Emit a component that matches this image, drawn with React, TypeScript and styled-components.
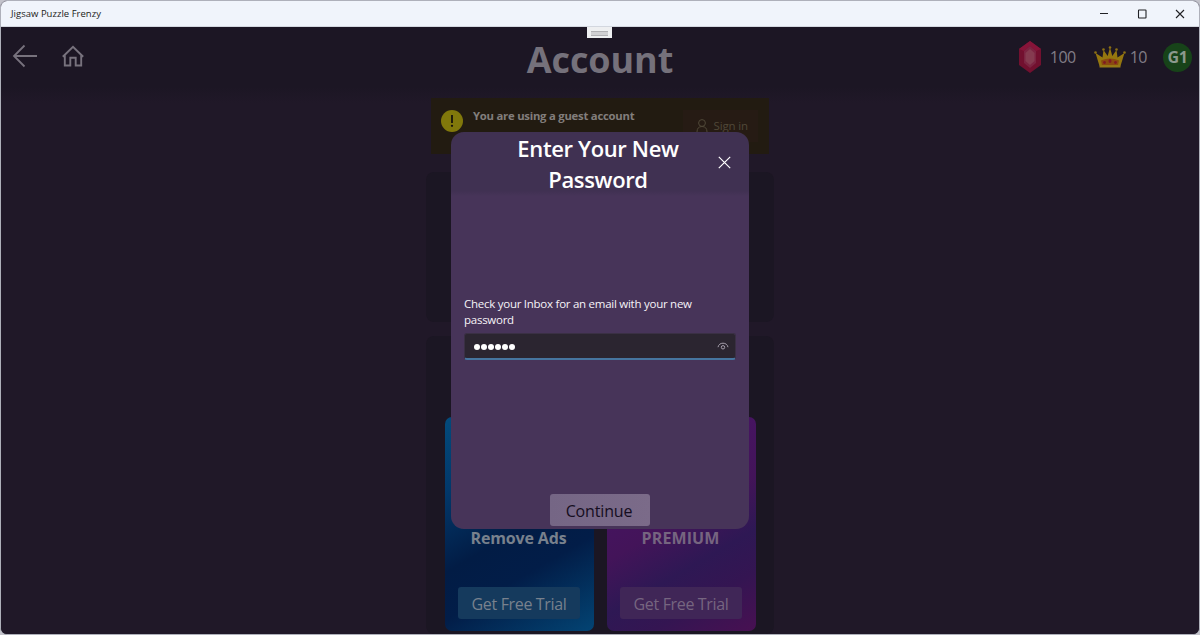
import React from 'react';
import styled, { createGlobalStyle } from 'styled-components';

const GlobalStyle = createGlobalStyle`
  * { box-sizing: border-box; }
  html, body { margin: 0; background: #c3c3cb; }
  body { font-family: 'Open Sans', 'Noto Sans', sans-serif; overflow: hidden; }
`;

const Window = styled.div`
  position: relative;
  display: flex;
  flex-direction: column;
  width: 1200px;
  height: 635px;
  border: 1px solid #aeb0ba;
  border-radius: 7px;
  overflow: hidden;
  background: #201928;
`;

const TitleBar = styled.header`
  display: flex;
  align-items: center;
  justify-content: space-between;
  flex: none;
  height: 26px;
  padding: 0 13px 0 10px;
  background: #f0f4fb;
  border-bottom: 1px solid #d3d7df;
`;

const WindowTitle = styled.span`
  font-size: 9.5px;
  letter-spacing: 0.02px;
  color: #1c1c20;
`;

const WindowControls = styled.div`
  display: flex;
  gap: 26px;
`;

const Page = styled.main`
  position: relative;
  display: flex;
  flex-direction: column;
  flex: 1;
  background: linear-gradient(#1c1624 0, #1c1624 60px, #201828 76px, #201828 100%);
`;

const Grip = styled.div`
  position: absolute;
  top: 0;
  left: 586px;
  width: 25px;
  height: 11px;
  padding: 4px;
  background: #eeeff1;
  &::after {
    content: '';
    display: block;
    height: 3px;
    background: #d0d0d3;
    border: solid #b0b0b4;
    border-width: 1px 0;
  }
`;

const TopBar = styled.div`
  display: grid;
  grid-template-columns: 1fr auto 1fr;
  align-items: center;
  flex: none;
  height: 71px;
  padding: 0 7px 12px 11px;
`;

const Navigation = styled.nav`
  display: flex;
  align-items: center;
  gap: 24px;
  padding-bottom: 2px;
`;

const PageTitle = styled.h1`
  margin: 7px 4px 0 0;
  font-size: 36px;
  line-height: 48px;
  font-weight: 700;
  letter-spacing: -0.1px;
  color: #75717b;
`;

const Balances = styled.div`
  display: flex;
  align-items: center;
  justify-content: flex-end;
  padding-top: 1px;
`;

const Amount = styled.span<{ $before: number; $after: number }>`
  margin: 0 ${(p) => p.$after}px 0 ${(p) => p.$before}px;
  font-size: 16px;
  letter-spacing: -0.5px;
  color: #817d86;
`;

const Avatar = styled.div`
  display: grid;
  place-items: center;
  width: 29px;
  height: 29px;
  border-radius: 50%;
  background: #174319;
  color: #8b998d;
  font-size: 16px;
  font-weight: 700;
  letter-spacing: -0.3px;
`;

const Column = styled.div`
  display: flex;
  flex-direction: column;
  align-items: center;
  width: 348px;
  margin: 0 auto;
  flex: 1;
`;

const GuestBanner = styled.section`
  display: flex;
  width: 338px;
  height: 56px;
  padding: 12px 11px 0 10px;
  background: #221b11;
  color: #827e7c;
`;

const AlertBadge = styled.div`
  display: grid;
  place-items: center;
  width: 22px;
  height: 22px;
  border-radius: 50%;
  background: #81780b;
`;

const GuestText = styled.strong`
  flex: 1;
  margin: -2px 0 0 10px;
  font-size: 11.3px;
  line-height: 16px;
  letter-spacing: -0.23px;
  white-space: nowrap;
`;

const SignIn = styled.span`
  display: flex;
  align-items: center;
  gap: 6px;
  height: 32px;
  padding: 0 10px 2px 13px;
  background: #261b14;
  font-size: 11.5px;
  letter-spacing: -0.15px;
  color: #504838;
`;

const Panel = styled.section<{ $height: number; $top: number }>`
  display: flex;
  align-items: flex-end;
  justify-content: center;
  gap: 13px;
  width: 348px;
  height: ${(p) => p.$height}px;
  margin-top: ${(p) => p.$top}px;
  padding-bottom: 3px;
  border-radius: 8px;
  background: #1b1623;
`;

const OfferCard = styled.article<{ $fill: string; $color: string }>`
  display: flex;
  flex-direction: column;
  align-items: center;
  justify-content: flex-end;
  width: 149px;
  height: 214px;
  padding-bottom: 12px;
  border-radius: 7px;
  background: ${(p) => p.$fill};
  color: ${(p) => p.$color};
`;

const OfferName = styled.h2<{ $spacing: number }>`
  margin: 0 1px 37px 0;
  font-size: 16px;
  line-height: 24px;
  font-weight: 700;
  letter-spacing: ${(p) => p.$spacing}px;
`;

const TrialButton = styled.button<{ $fill: string }>`
  width: 122px;
  height: 32px;
  padding: 1px 0 0;
  border: 0;
  border-radius: 3px;
  background: ${(p) => p.$fill};
  color: inherit;
  font-family: inherit;
  font-size: 16px;
  letter-spacing: -0.34px;
`;

const Dialog = styled.section`
  position: absolute;
  top: 105px;
  left: 450px;
  display: flex;
  flex-direction: column;
  width: 298px;
  height: 397px;
  padding: 0 13px 3px;
  border-radius: 13px;
  background: linear-gradient(#403152 0, #403152 59px, #473459 64px, #473459 100%);
  color: #fff;
`;

const DialogTitle = styled.h2`
  margin: 1px 50px 0 46px;
  font-size: 22px;
  line-height: 31px;
  font-weight: 600;
  letter-spacing: -0.36px;
  text-align: center;
  white-space: nowrap;
`;

const CloseButton = styled.button`
  position: absolute;
  top: 24px;
  right: 18px;
  display: grid;
  width: 13px;
  height: 13px;
  padding: 0;
  border: 0;
  background: none;
`;

const Form = styled.div`
  display: flex;
  flex-direction: column;
  margin-top: 101px;
  flex: 1;
`;

const Message = styled.p`
  margin: 0 0 6px;
  font-size: 11.5px;
  line-height: 15.5px;
  letter-spacing: -0.26px;
  color: #f6f3f8;
  white-space: nowrap;
`;

const PasswordField = styled.div`
  display: flex;
  align-items: center;
  justify-content: space-between;
  height: 27px;
  padding: 1px 6px 0 9px;
  border: 1px solid #3a3044;
  border-bottom: 2px solid #46759f;
  border-radius: 3px;
  background: #2b2530;
`;

const Dots = styled.div`
  display: flex;
  gap: 1px;
`;

const Dot = styled.i`
  width: 6px;
  height: 6px;
  border-radius: 50%;
  background: #fff;
`;

const ContinueButton = styled.button`
  align-self: center;
  width: 100px;
  height: 32px;
  padding: 2px 2px 0 0;
  border: 0;
  border-radius: 3px;
  background: linear-gradient(90deg, #756685, #7b6b89);
  color: #150d20;
  font-family: inherit;
  font-size: 16px;
  letter-spacing: -0.15px;
`;

const BackIcon = () => (
  <svg width="26" height="24" viewBox="0 0 26 24" fill="none" stroke="#77727d" strokeWidth="1.8">
    <path d="M25 12H2M12.500 1.500 2 12l10.500 10.500" />
  </svg>
);

const HomeIcon = () => (
  <svg width="22" height="22" viewBox="0 0 22 22" fill="none" stroke="#77727d" strokeWidth="1.9">
    <path d="M.8 11.800 11 1.800l10.200 10M2.800 10.500V20.500H8.300V12.700h5.400v7.800h5.500v-10" />
  </svg>
);

const GemIcon = () => (
  <svg width="24" height="32" viewBox="0 0 24 32">
    <path d="M11 0 22 8v16l-11 8L0 24V8z" fill="#72102f" />
    <path d="M11 0 22 8l-5 2-6-5-6 5-5-2z" fill="#861439" />
    <path d="M11 5 17 10v12l-6 5-6-5V10z" fill="#7c2442" />
    <path d="m11 8 4.500 4v8L11 24l-4.500-4v-8z" fill="#853b50" />
  </svg>
);

const CrownIcon = () => (
  <svg width="32" height="22" viewBox="0 0 32 22">
    <path d="M5.500 20 1.500 7l7 4.500L9.500 4l4.200 6L16 1.500 18.300 10l4.200-6 1 7.500 7-4.500-4 13z" fill="#94760f" />
    <path d="M7 14.500q9-4 18 0l-1 4.500H8z" fill="#8a4b10" />
    <path d="M5.500 19.500h21v2h-21z" fill="#957916" />
    <g fill="#8c7013">
      <circle cx="1.500" cy="6.500" r="1.300" /><circle cx="9.500" cy="3.500" r="1.300" />
      <circle cx="16" cy="1.500" r="1.300" /><circle cx="22.500" cy="3.500" r="1.300" />
      <circle cx="30.500" cy="6.500" r="1.300" />
    </g>
    <g fill="#801b23">
      <circle cx="10.500" cy="16.500" r="1.400" /><ellipse cx="16" cy="15" rx="1.500" ry="2" />
      <circle cx="21.500" cy="16.500" r="1.400" />
    </g>
  </svg>
);

const AlertIcon = () => (
  <svg width="4" height="14" viewBox="0 0 4 14" fill="#17120c">
    <path d="M1.100 1h1.800v8H1.100z" /><circle cx="2" cy="11.800" r="1.150" />
  </svg>
);

const PersonIcon = () => (
  <svg width="12" height="13" viewBox="0 0 12 13" fill="none" stroke="currentColor">
    <circle cx="6" cy="4" r="3.400" /><path d="M1 13q0-5.500 5-5.500T11 13" />
  </svg>
);

const EyeIcon = () => (
  <svg width="12" height="9" viewBox="0 0 12 9" fill="none" stroke="#a69fac">
    <path d="M1 5.200C1.600 2.500 3.500 1.200 6 1.200s4.400 1.300 5 4" /><circle cx="6" cy="5.300" r="1.700" />
  </svg>
);

const CloseIcon = () => (
  <svg width="13" height="13" viewBox="0 0 13 13" fill="none" stroke="#fff" strokeWidth="1.200">
    <path d="m.8.8 11.400 11.400M12.200.8.8 12.200" />
  </svg>
);

const ControlIcon = ({ d }: { d: string }) => (
  <svg width="12" height="12" viewBox="0 0 12 12" fill="none" stroke="#202125" strokeWidth="1.100">
    <path d={d} />
  </svg>
);

export default function App() {
  return (
    <>
      <GlobalStyle />
      <Window>
        <TitleBar>
          <WindowTitle>Jigsaw Puzzle Frenzy</WindowTitle>
          <WindowControls>
            <ControlIcon d="M2 5.500h8" />
            <ControlIcon d="M3 2h6.500q.5 0 .5.500V9.500q0 .5-.5.500H3q-.5 0-.5-.5v-7q0-.5.500-.5z" />
            <ControlIcon d="m2 2 8 8M10 2 2 10" />
          </WindowControls>
        </TitleBar>
        <Page>
          <Grip />
          <TopBar>
            <Navigation><BackIcon /><HomeIcon /></Navigation>
            <PageTitle>Account</PageTitle>
            <Balances>
              <GemIcon /><Amount $before={7} $after={18}>100</Amount>
              <CrownIcon /><Amount $before={4} $after={16}>10</Amount>
              <Avatar>G1</Avatar>
            </Balances>
          </TopBar>
          <Column>
            <GuestBanner>
              <AlertBadge><AlertIcon /></AlertBadge>
              <GuestText>You are using a guest account</GuestText>
              <SignIn><PersonIcon />Sign in</SignIn>
            </GuestBanner>
            <Panel $height={150} $top={18} />
            <Panel $height={298} $top={14}>
              <OfferCard
                $color="#78818d"
                $fill="linear-gradient(150deg, #034b7c 0%, #02386a 25%, #021c45 52%, #021d48 68%, #034473 100%)"
              >
                <OfferName $spacing={-0.15}>Remove Ads</OfferName>
                <TrialButton $fill="#153a5d">Get Free Trial</TrialButton>
              </OfferCard>
              <OfferCard
                $color="#766580"
                $fill="linear-gradient(150deg, #4a146d 0%, #431459 48%, #2e1854 66%, #341552 80%, #481052 100%)"
              >
                <OfferName $spacing={0.1}>PREMIUM</OfferName>
                <TrialButton $fill="#402657">Get Free Trial</TrialButton>
              </OfferCard>
            </Panel>
          </Column>
          <Dialog>
            <DialogTitle>Enter Your New<br />Password</DialogTitle>
            <CloseButton aria-label="Close"><CloseIcon /></CloseButton>
            <Form>
              <Message>Check your Inbox for an email with your new<br />password</Message>
              <PasswordField>
                <Dots>{[0, 1, 2, 3, 4, 5].map((n) => <Dot key={n} />)}</Dots>
                <EyeIcon />
              </PasswordField>
            </Form>
            <ContinueButton>Continue</ContinueButton>
          </Dialog>
        </Page>
      </Window>
    </>
  );
}
